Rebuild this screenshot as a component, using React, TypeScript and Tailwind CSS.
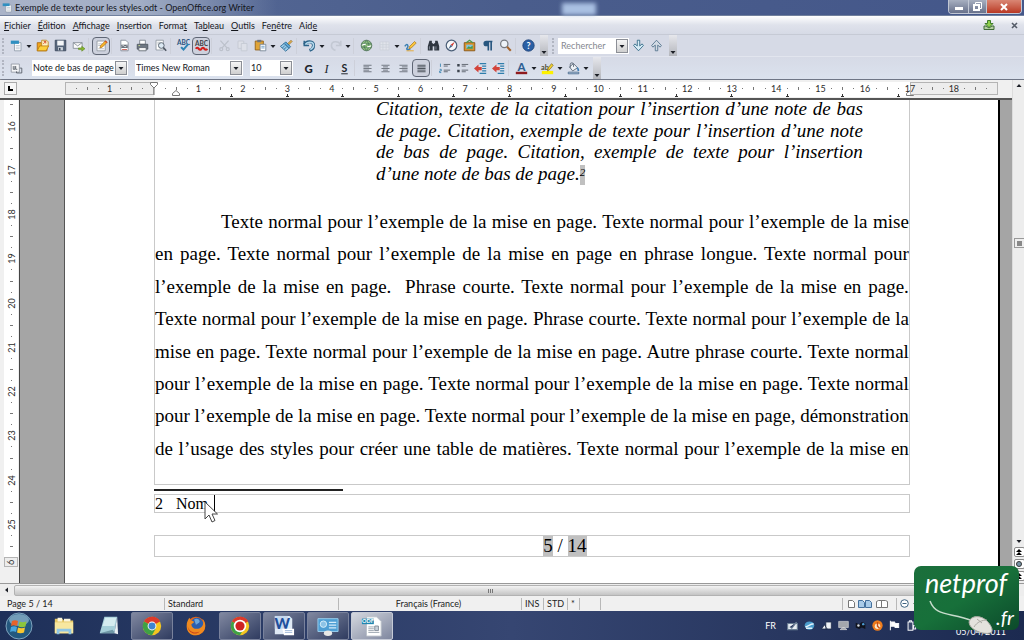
import { useState } from "react";
import type { ReactNode } from "react";
import clsx from "clsx";

const uiFont = "font-['Lato','Open_Sans',sans-serif]";
const docFont = "font-['Liberation_Serif','Times_New_Roman',serif]";

// [before, mnemonic, after]
const menus: [string, string, string][] = [
  ["", "F", "ichier"],
  ["", "É", "dition"],
  ["", "A", "ffichage"],
  ["", "I", "nsertion"],
  ["Forma", "t", ""],
  ["Ta", "b", "leau"],
  ["", "O", "utils"],
  ["Fe", "n", "être"],
  ["Aid", "e", ""],
];

const citation = [
  "Citation, texte de la citation pour l’insertion d’une note de bas",
  "de page. Citation, exemple de texte pour l’insertion d’une note",
  "de bas de page. Citation, exemple de texte pour l’insertion",
];

const body = [
  "Texte normal pour l’exemple de la mise en page. Texte normal pour l’exemple de la mise",
  "en page. Texte normal pour l’exemple de la mise en page en phrase longue. Texte normal pour",
  "l’exemple de la mise en page. \u00a0Phrase courte. Texte normal pour l’exemple de la mise en page.",
  "Texte normal pour l’exemple de la mise en page. Phrase courte. Texte normal pour l’exemple de la",
  "mise en page. Texte normal pour l’exemple de la mise en page. Autre phrase courte. Texte normal",
  "pour l’exemple de la mise en page. Texte normal pour l’exemple de la mise en page. Texte normal",
  "pour l’exemple de la mise en page. Texte normal pour l’exemple de la mise en page, démonstration",
  "de l’usage des styles pour créer une table de matières. Texte normal pour l’exemple de la mise en",
];

/* ---------- toolbar icons, all on a 16x16 grid ---------- */

const page = <path d="M3.5 1.5h6l3 3v10h-9z" fill="#fff" stroke="#7b8490" />;

const icons: Record<string, ReactNode> = {
  new: (
    <>
      <path d="M5.5 4.5h8v10h-8z" fill="#fff" stroke="#8a96a5" />
      <path d="M1 2h10v4H1z" fill="#2f8fc0" />
      <path d="M7 8h5M7 10h5M7 12h5" stroke="#b5bfca" />
    </>
  ),
  open: (
    <>
      <path d="M1.5 4.5h5l1 2h6v8h-12z" fill="#f2a51d" stroke="#a9650c" />
      <path d="M7 1.5h6l2 2v6H7z" fill="#fff3c4" stroke="#b98318" />
      <path d="M1.5 14.5l3-6h11l-3 6z" fill="#fcd03c" stroke="#b97a10" />
      <path d="M9 6l3-3m0 0H9.5m2.5 0v2.5" stroke="#cf3a19" fill="none" />
    </>
  ),
  save: (
    <>
      <path d="M1.5 1.5h13v13h-13z" fill="#56657a" stroke="#39465a" />
      <path d="M4 2h8v6H4z" fill="#f4f6f8" />
      <path d="M5 10h6v4H5z" fill="#cdd5dd" />
      <path d="M6 11h2v3H6z" fill="#39465a" />
    </>
  ),
  mail: (
    <>
      <path d="M1.5 4.5h11v7h-11z" fill="#fbfbfb" stroke="#7e8791" />
      <path d="M1.5 4.5l5.5 4 5.5-4" fill="none" stroke="#7e8791" />
      <path d="M8 11h4V9l4 3-4 3v-2H8z" fill="#86b82e" stroke="#527a15" strokeWidth=".6" />
    </>
  ),
  edit: (
    <>
      <path d="M2.5 2.5h10v12h-10z" fill="#fff" stroke="#8a929c" />
      <path d="M4 6h5M4 8h4M4 12h7" stroke="#aab2bb" />
      <path d="M6 11l1-3 6-6 2 2-6 6z" fill="#f7b52b" stroke="#a8670f" strokeWidth=".8" />
      <path d="M12 3l1-1 2 2-1 1z" fill="#d8432e" />
    </>
  ),
  pdf: (
    <>
      {page}
      <path d="M4 7h8v4H4z" fill="#626a74" />
      <path d="M5 9c2-3 3 3 6-1" stroke="#fff" fill="none" />
      <path d="M5 13h6" stroke="#c83d32" />
    </>
  ),
  print: (
    <>
      <path d="M4.5 1.5h7v5h-7z" fill="#fff" stroke="#737b85" />
      <path d="M1.5 6.5h13v6h-13z" fill="#6f7883" stroke="#4a525c" />
      <path d="M3.5 10.5h9v4h-9z" fill="#f4f4f4" stroke="#5c646e" />
      <path d="M3 8h2" stroke="#c7e08a" />
    </>
  ),
  preview: (
    <>
      <path d="M2.5 1.5h9v12h-9z" fill="#fff" stroke="#8a929c" />
      <path d="M4 4h4M4 6h2" stroke="#b5bcc4" />
      <circle cx="9" cy="8" r="3.5" fill="#dce9f3" stroke="#5c6672" strokeWidth="1.2" />
      <path d="M11.5 10.5L15 14.5" stroke="#4c5560" strokeWidth="2" />
    </>
  ),
  spell: (
    <>
      <text x="0" y="7" fontSize="8" fontWeight="700" fill="#27507c">ABC</text>
      <path d="M5 10l3 3 6-7" fill="none" stroke="#2d84b5" strokeWidth="2.5" />
    </>
  ),
  autospell: (
    <>
      <text x="0" y="8" fontSize="8" fontWeight="700" fill="#3f3f46">ABC</text>
      <path d="M1 12q1.500-2.500 3.500 0t3.500 0 3.500 0 3.500 0" fill="none" stroke="#d3201c" strokeWidth="2.6" />
    </>
  ),
  cut: (
    <g stroke="#bcc1cb" fill="none" strokeWidth="1.5">
      <path d="M3 2l8 9M13 2L5 11" />
      <circle cx="4" cy="12.5" r="1.8" />
      <circle cx="12" cy="12.5" r="1.8" />
    </g>
  ),
  copy: (
    <g fill="#dde0e8" stroke="#c3c8d2">
      <path d="M2.5 2.5h7v9h-7z" />
      <path d="M6.5 5.5h7v9h-7z" />
    </g>
  ),
  paste: (
    <>
      <path d="M1.5 2.5h10v11h-10z" fill="#e0a436" stroke="#8c5b12" />
      <path d="M4 1h5v3H4z" fill="#6d7580" />
      <path d="M7.5 6.5h7v8h-7z" fill="#fff" stroke="#6e7f93" />
      <path d="M9 9h4M9 11h4" stroke="#5c93c4" />
    </>
  ),
  brush: (
    <>
      <path d="M9 6l4.5-4.5 1.5 1.5L10.5 7.5z" fill="#e0b04d" stroke="#855c1a" strokeWidth=".7" />
      <path d="M7 3.5l6 6-2 2-6-6z" fill="#5fa9d8" stroke="#24648f" />
      <path d="M5 5.5l6 6-4 3.5L0.5 9z" fill="#9dcdea" stroke="#24648f" />
      <path d="M3 11l3-3M5 12.5l3-2.5" stroke="#24648f" />
    </>
  ),
  undo: (
    <>
      <path d="M1.5 2v6h6" fill="none" stroke="#2b6288" strokeWidth="1.8" />
      <path d="M2 7c2-5 11-5 11 1 0 3-2 5-5 6" fill="none" stroke="#2b6288" strokeWidth="3.8" />
      <path d="M3 7c2-4 10-4 10 1 0 3-2 4-4 5" fill="none" stroke="#b3d8ec" strokeWidth="1.8" />
    </>
  ),
  redo: (
    <path d="M14 7C12 2 3 2 3 8c0 3 2 5 5 6M14.5 2v6h-6" fill="none" stroke="#c3c8d3" strokeWidth="2" />
  ),
  globe: (
    <>
      <circle cx="8" cy="8" r="6.5" fill="#8ebf7c" stroke="#4c6c58" />
      <path d="M2 6h12M2 10h12M8 2c-4 4-4 8 0 12M8 2c4 4 4 8 0 12" stroke="#49745b" fill="none" />
      <path d="M3 8a2 2 0 0 1 2-1.500h2M13 8a2 2 0 0 1-2 1.500H9" stroke="#fff" strokeWidth="1.5" fill="none" />
    </>
  ),
  table: <path d="M2.5 3.5h11v10h-11zM2.5 7h11M2.5 10h11M6 3.5v10M10 3.5v10" fill="#e1e4eb" stroke="#cdd1da" />,
  draw: (
    <>
      <path d="M1 9c3-5 5 0 3 2s1 3 4 1" fill="none" stroke="#3c7fb2" strokeWidth="1.8" />
      <path d="M6 12l1-3 6-6 2 2-6 6z" fill="#fbc63e" stroke="#a3700f" strokeWidth=".8" />
      <path d="M3 14.5h9" stroke="#e7a21b" />
    </>
  ),
  find: (
    <g fill="#2f3640">
      <path d="M3 2h3v3h1v9H1V9zM13 2h-3v3H9v9h6V9z" />
      <path d="M6 6h4v3H6z" />
      <path d="M3 9v4M11 9v4" stroke="#8f99a6" />
    </g>
  ),
  navigator: (
    <>
      <circle cx="8" cy="8" r="6.5" fill="#f4f7fa" stroke="#4b5f78" strokeWidth="1.5" />
      <path d="M12 3.5L9 9 7 7z" fill="#d2372c" />
      <path d="M4 12.5L7 7l2 2z" fill="#3c5d86" />
    </>
  ),
  gallery: (
    <>
      <path d="M1.5 4.5h13v10h-13z" fill="#d9922a" stroke="#7e4e10" />
      <path d="M4 7h8v5H4z" fill="#7fc4e2" />
      <path d="M4 12l3-3 2 1 3-2v4z" fill="#4d9745" />
      <path d="M4 4.5l4-3 4 3" fill="none" stroke="#4d9745" strokeWidth="1.5" />
    </>
  ),
  pilcrow: <path d="M14 2H6.5a3.5 3.5 0 0 0 0 7H8v5h2V4h1.5v10h2V4H14z" fill="#27567f" />,
  zoom: (
    <>
      <circle cx="6.5" cy="6" r="4.5" fill="#eef3f8" stroke="#75797f" strokeWidth="1.5" />
      <path d="M10 9.5L14.5 14.5" stroke="#a4642b" strokeWidth="2.5" />
    </>
  ),
  help: (
    <>
      <circle cx="8" cy="8" r="7" fill="#2a5fa5" stroke="#1c3f74" />
      <text x="8" y="12" fontSize="11" fontWeight="700" fill="#fff" textAnchor="middle">?</text>
    </>
  ),
  down: <path d="M6.5 1.5h3v7l3-2.5 1.5 2-6 6.5L2 8l1.5-2 3 2.5z" fill="#d6ebf5" stroke="#25617f" />,
  up: <path d="M6.5 14.5h3v-7l3 2.5L14 8 8 1.5 2 8l1.5 2 3-2.5z" fill="#d3dbe4" stroke="#4b6d86" />,
  styles: (
    <>
      <path d="M1.5 2.5h10v10h-10z" fill="#f5f6f8" stroke="#8d949e" />
      <path d="M4 5v4h2V5M7 5v4h2M12 7.5h2.5v6H8v-2" stroke="#4d555f" fill="none" />
    </>
  ),
  bold: <text x="8" y="13" fontSize="14" fontWeight="900" fill="#20242b" textAnchor="middle">G</text>,
  italic: (
    <text x="8" y="13" fontSize="15" fontStyle="italic" fontWeight="400" fill="#20242b" textAnchor="middle" className="font-['Liberation_Serif',serif]">I</text>
  ),
  underline: (
    <>
      <text x="8" y="12" fontSize="13" fontWeight="700" fill="#20242b" textAnchor="middle">S</text>
      <path d="M4 14.5h8" stroke="#20242b" strokeWidth="1.2" />
    </>
  ),
  left: <path d="M3 4h10M3 6h7M3 8h10M3 10h7M3 12h10" stroke="#5c636d" />,
  center: <path d="M3 4h10M5 6h6M3 8h10M5 10h6M3 12h10" stroke="#5c636d" />,
  right: <path d="M3 4h10M6 6h7M3 8h10M6 10h7M3 12h10" stroke="#5c636d" />,
  justify: <path d="M3 4h10M3 6h10M3 8h10M3 10h10M3 12h10" stroke="#4c535c" strokeWidth="1.2" />,
  numbers: (
    <>
      <path d="M3 2v4M2 9h2v2H2v2h2" stroke="#2f7eac" fill="none" />
      <path d="M7 3h8M7 5h5M7 10h8M7 12h5" stroke="#4c535c" />
    </>
  ),
  bullets: (
    <>
      <path d="M1.5 2.5h3v3h-3zM1.5 9.5h3v3h-3z" fill="#3c444e" />
      <path d="M7 3h8M7 5h5M7 10h8M7 12h5" stroke="#4c535c" />
    </>
  ),
  outdent: (
    <>
      <path d="M7 2h8M10 5h5M10 8h5M10 11h5M7 14h8" stroke="#2f7eac" strokeWidth="1.4" />
      <path d="M9.5 6H5.5V3L0 8l5.5 5v-3h4z" fill="#d3433a" />
    </>
  ),
  fontColor: (
    <>
      <text x="8" y="11" fontSize="14" fontWeight="900" fill="#2f5f93" textAnchor="middle">A</text>
      <path d="M1 12h14v3H1z" fill="#8e1b1f" />
    </>
  ),
  highlight: (
    <>
      <path d="M1 11h14v4H1z" fill="#fdf100" />
      <text x="0" y="10" fontSize="9" fontWeight="700" fill="#4b4b32">ab</text>
      <path d="M8 11l1-4 4-5 2 2-4 5z" fill="#f5d22f" stroke="#7a6612" strokeWidth=".8" />
    </>
  ),
  fill: (
    <>
      <path d="M3 6l5-4 5 5-6 4z" fill="#eef2f6" stroke="#505e6e" />
      <path d="M4 7V3a2 2 0 0 1 4 0v3" fill="none" stroke="#505e6e" />
      <path d="M12 6c3 1 3 3 3 5h-2z" fill="#3f7fb5" />
      <path d="M1.5 12.5h13v2h-13z" fill="#c7d6e4" stroke="#3f6288" />
    </>
  ),
};

const labels: Record<string, string> = {
  new: "Nouveau", open: "Ouvrir", save: "Enregistrer", mail: "Envoyer par e-mail", edit: "Mode édition",
  pdf: "Exporter au format PDF", print: "Imprimer", preview: "Aperçu", spell: "Orthographe",
  autospell: "Vérification automatique", cut: "Couper", copy: "Copier", paste: "Coller", brush: "Pinceau",
  undo: "Annuler", redo: "Restaurer", globe: "Hyperlien", table: "Tableau", draw: "Dessin", find: "Rechercher",
  navigator: "Navigateur", gallery: "Galerie", pilcrow: "Caractères non imprimables", zoom: "Zoom", help: "Aide",
  down: "Suivant", up: "Précédent", styles: "Styles et formatage", bold: "Gras", italic: "Italique",
  underline: "Souligné", left: "Aligner à gauche", center: "Centrer", right: "Aligner à droite",
  justify: "Justifier", numbers: "Numérotation", bullets: "Puces", outdent: "Diminuer le retrait",
  fontColor: "Couleur de police", highlight: "Surlignage", fill: "Arrière-plan",
};

// "|" separator, "v" drop-down caret, "+" prefix = pressed
const standardBar = "new v open save mail | +edit | pdf print preview | spell +autospell | cut copy paste v brush | undo v redo v | globe table v draw | find navigator gallery pilcrow zoom | help".split(" ");
const formatBar = "bold italic underline | left center right +justify | numbers bullets outdent outdent | fontColor v highlight v fill v".split(" ");

function Tool({ name }: { name: string }) {
  const pressed = name.startsWith("+");
  const id = pressed ? name.slice(1) : name;
  return (
    <button
      aria-label={labels[id]}
      className={clsx(
        "flex size-[18px] shrink-0 items-center justify-center",
        pressed && "rounded-sm border border-[#5f6675] bg-[#cdd1dd]"
      )}
    >
      <svg viewBox="0 0 16 16" className="size-[13px] shrink-0 overflow-visible">{icons[id]}</svg>
    </button>
  );
}

function Caret() {
  return (
    <svg viewBox="0 0 8 8" className="size-2 shrink-0">
      <path d="M1.5 3h5L4 6z" fill="#1c1f26" />
    </svg>
  );
}

function Tools({ items }: { items: string[] }) {
  return (
    <>
      {items.map((item, i) => {
        if (item === "|") return <span key={i} className="mr-[3px] ml-px h-4 w-px shrink-0 bg-[#cdd0da]" />;
        if (item === "v") return <Caret key={i} />;
        return <Tool key={i} name={item} />;
      })}
    </>
  );
}

function Grip() {
  return <span className="mr-px ml-0.5 h-4 w-1 shrink-0 border-l-2 border-dotted border-[#b1b5c1]" />;
}

function Overflow() {
  return (
    <button aria-label="Plus de boutons" className="flex h-full w-2 shrink-0 items-end justify-center bg-linear-to-b from-[#e6e7ec] to-[#b4b6bc]">
      <Caret />
    </button>
  );
}

function Combo({ label, value, width }: { label: string; value: string; width: string }) {
  return (
    <label className={clsx("relative h-4 shrink-0 bg-white", width)}>
      <select aria-label={label} defaultValue={value} className="block h-4 w-full appearance-none pl-px text-[9px] leading-4 outline-none">
        <option>{value}</option>
      </select>
      <DropArrow />
    </label>
  );
}

function DropArrow() {
  return (
    <span className="pointer-events-none absolute top-px right-px flex h-3.5 w-3 items-center justify-center border border-[#8c8f96] bg-linear-to-b from-[#f6f6f6] to-[#cfcfcf]">
      <Caret />
    </span>
  );
}

/* ---------- rulers ---------- */

function HRulerMark({ quarter, tab }: { quarter: number; tab?: boolean }) {
  const n = Math.abs(quarter);
  return (
    <span className="relative flex h-[13px] w-0 items-center justify-center">
      {n % 4 === 0 ? (
        <span>{n / 4}</span>
      ) : (
        <span className={clsx("w-px shrink-0 bg-[#777]", n % 2 === 0 ? "h-[3px]" : "h-px")} />
      )}
      {tab && (
        <span className="absolute -bottom-0.5 flex flex-col items-center">
          <span className="h-0.5 w-px bg-[#333]" />
          <span className="h-px w-[3px] bg-[#333]" />
        </span>
      )}
    </span>
  );
}

function range(from: number, to: number) {
  return Array.from({ length: to - from + 1 }, (_, i) => from + i);
}

function HorizontalRuler() {
  return (
    <div className="flex h-[18px] items-start bg-[#f0f0f0] pt-0.5 text-[9px] leading-none text-[#2b2b2b]">
      <div className="flex w-[65px] shrink-0 pl-1">
        <button aria-label="Tabulation" className="flex size-[13px] items-center justify-center border border-[#aaa] bg-[#f6f6f6]">
          <span className="size-[5px] border-b-2 border-l-2 border-black" />
        </button>
      </div>
      <div className="flex h-[13px] w-[89px] shrink-0 items-center justify-evenly border border-[#b4b4b4] bg-[#ededed]">
        {range(-7, -1).map((q) => <HRulerMark key={q} quarter={q} />)}
      </div>
      <div className="relative flex h-[15px] flex-1 justify-evenly bg-white">
        {range(1, 67).map((q) => <HRulerMark key={q} quarter={q} tab={q >= 7 && (q - 7) % 5 === 0} />)}
        {/* indent handles */}
        <svg viewBox="0 0 30 15" className="absolute top-0 -left-1 h-[15px] w-[30px]">
          <path d="M.5.5h7v2l-3.5 3.5L.5 2.5zM4 6v7" fill="#fff" stroke="#777" />
          <path d="M22.5 13.5v-2l3.5-3 3.5 3v2z" fill="#fff" stroke="#777" />
        </svg>
        <svg viewBox="0 0 8 15" className="absolute top-0 -right-1 h-[15px] w-2">
          <path d="M.5 13.5v-2L4 8.5l3.5 3v2z" fill="#fff" stroke="#777" />
        </svg>
      </div>
      <div className="relative mr-3.5 flex h-[13px] w-[88px] shrink-0 items-center justify-evenly border border-[#b4b4b4] bg-[#ededed]">
        <span className="absolute top-0 -left-1.5 leading-[11px]">17</span>
        {range(69, 75).map((q) => <HRulerMark key={q} quarter={q} />)}
      </div>
    </div>
  );
}

function VerticalRuler() {
  return (
    <div className="flex w-[19px] shrink-0 flex-col bg-[#f0f0f0] pl-1 text-[9px] leading-none text-[#2b2b2b]">
      <div className="flex w-3.5 flex-1 flex-col justify-between bg-white pt-1 pb-2.5">
        {range(62, 102).map((q) => (
          <span key={q} className="flex h-0 items-center justify-center">
            {q % 4 === 0 ? (
              <span className="-rotate-90">{q / 4}</span>
            ) : (
              <span className={clsx("h-px shrink-0 bg-[#777]", q % 2 === 0 ? "w-[3px]" : "w-px")} />
            )}
          </span>
        ))}
      </div>
      <div className="mb-4 flex h-2.5 w-3.5 items-center justify-center border border-[#b4b4b4] bg-[#ededed]">
        <span className="-rotate-90">6</span>
      </div>
    </div>
  );
}

/* ---------- document ---------- */

function Line({ children, className }: { children: ReactNode; className?: string }) {
  return <p className={clsx("text-justify whitespace-nowrap [text-align-last:justify]", className)}>{children}</p>;
}

function Document() {
  return (
    <div className="flex flex-1 border-l border-[#444] bg-[#a5a5a5] pr-3 pl-11">
      <div className={clsx("flex flex-1 flex-col border-r-2 border-l border-r-black border-l-[#555] bg-white pr-[88px] pl-[89px] text-[19px] text-black", docFont)}>
        <div className="flex h-[385px] flex-col border-x border-b border-[#c9c9c9]">
          <div className="grid h-[86px] auto-rows-fr pr-[46px] pl-[221px] leading-[17px] italic">
            {citation.map((line) => <Line key={line}>{line}</Line>)}
            <p className="whitespace-nowrap">
              d’une note de bas de page.
              <span className="inline-block h-5 bg-[#c0c0c0] align-top text-[11px] leading-[14px]">2</span>
            </p>
          </div>
          <div className="mt-[21px] grid h-[259px] auto-rows-fr leading-[29px]">
            {body.map((line, i) => <Line key={i} className={i === 0 ? "pl-[66px]" : undefined}>{line}</Line>)}
          </div>
        </div>
        <div className="mt-1 h-0.5 w-1/4 bg-[#222]" />
        <div className="relative mt-[3px] flex h-[19px] border border-[#c9c9c9] text-base leading-[18px]">
          <span className="w-[21px]">2</span>
          <span>Nom</span>
          <span className="ml-1.5 h-[17px] w-px bg-black" />
          <svg viewBox="0 0 14 22" className="absolute top-1.5 left-[49px] h-[22px] w-3.5">
            <path d="M1 1v17l4-4 3 7 3-1.500L8 13h5.500z" fill="#fff" stroke="#444" />
          </svg>
        </div>
        <div className="mt-[22px] h-[22px] border border-[#c9c9c9] pl-[66px] text-center leading-5">
          <span className="inline-block bg-[#c0c0c0]">5</span> / <span className="inline-block bg-[#c0c0c0]">14</span>
        </div>
      </div>
    </div>
  );
}

function VerticalScrollbar() {
  return (
    <div className="flex w-3.5 shrink-0 flex-col items-center border-l border-[#dcdcdc] bg-[#ededed]">
      <button aria-label="Défiler vers le haut" className="mt-0.5 rotate-180"><Caret /></button>
      <button aria-label="Position" className="mt-[148px] flex h-2.5 w-[11px] items-center justify-center border border-[#999] bg-[#eee]">
        <span className="size-[5px] bg-[#888]" />
      </button>
      <div className="flex-1" />
      <button aria-label="Défiler vers le bas" className="mb-0.5"><Caret /></button>
      {["Page précédente", "Navigation", "Page suivante"].map((label, i) => (
        <button key={label} aria-label={label} className="mb-0.5 flex h-2.5 w-[11px] items-center justify-center rounded-xs border border-[#888] bg-white">
          <svg viewBox="0 0 8 8" className="size-2">
            {i === 1 ? <circle cx="4" cy="4" r="2.5" fill="#7896a8" stroke="#333" /> : <path d="M1 4l3-3 3 3zM1 7l3-3 3 3z" />}
          </svg>
        </button>
      ))}
    </div>
  );
}

function HorizontalScrollbar() {
  return (
    <div className="flex h-[13px] items-center border-t border-[#999] bg-[#ededed] pr-3">
      <button aria-label="Défiler à gauche" className="flex w-3.5 rotate-90 items-center justify-center"><Caret /></button>
      <div className="flex h-[11px] flex-1 justify-center gap-px rounded-xs border border-[#b2b2b2] bg-linear-to-b from-[#f3f3f3] to-[#c4c4c4] pt-[3px] pr-[46px]">
        {[0, 1, 2].map((i) => <span key={i} className="h-1 w-px bg-[#777]" />)}
      </div>
    </div>
  );
}

/* ---------- status bar ---------- */

function StatusBar() {
  const cell = "flex h-3 shrink-0 items-center border-l border-[#b8b8b8] pl-[3px]";
  return (
    <div className="flex h-[15px] items-center bg-[#f0f0f0] text-[9px] leading-none text-[#222]">
      <span className="w-[164px] shrink-0 pl-[7px]">Page 5 / 14</span>
      <span className={clsx(cell, "w-[174px]")}>Standard</span>
      <span className={clsx(cell, "w-[183px] justify-center pr-1.5")}>Français (France)</span>
      <span className={clsx(cell, "w-[22px]")}>INS</span>
      <span className={clsx(cell, "w-6")}>STD</span>
      <span className={clsx(cell, "w-3")}>*</span>
      <span className={clsx(cell, "w-[21px]")} />
      <span className={clsx(cell, "flex-1")} />
      <span className={clsx(cell, "w-[54px]")}>
        <svg viewBox="0 0 44 10" className="h-2.5 w-11" fill="#fff" stroke="#777">
          <path d="M2.5 1.5h4l2 2v5h-6z" />
          <path d="M12.5 1.5h4l2 2v5h-6zM19.5 1.5h4l2 2v5h-6z" fill="#a9cbe8" stroke="#44709d" />
          <path d="M30.5 2.5l2-1h3v7h-5zM35.5 1.5h4l2 1v6h-6z" />
        </svg>
      </span>
      <span className={clsx(cell, "w-32 gap-1")}>
        <button aria-label="Zoom arrière">
          <svg viewBox="0 0 9 9" className="size-[9px]" fill="#fff" stroke="#3e6380">
            <circle cx="4.5" cy="4.5" r="3.8" />
            <path d="M2.5 4.5h4" />
          </svg>
        </button>
        <span className="h-px w-20 bg-[#999]" />
      </span>
    </div>
  );
}

/* ---------- taskbar ---------- */

function Chrome({ center }: { center: string }) {
  return (
    <>
      <circle cx="12" cy="12" r="10" fill="#f4c520" />
      <path d="M12 12L3.3 7A10 10 0 0 1 20.7 7z" fill="#dc3a2b" />
      <path d="M12 12L3.3 7A10 10 0 0 0 12 22l4-7z" fill="#3fa145" />
      <path d="M12 2a10 10 0 0 1 8.7 5H12z" fill="#dc3a2b" />
      <circle cx="12" cy="12" r="4.8" fill="#fff" />
      <circle cx="12" cy="12" r="3.8" fill={center} />
    </>
  );
}

const apps: { label: string; state?: "open" | "active"; icon: ReactNode }[] = [
  {
    label: "Explorateur",
    icon: (
      <>
        <path d="M2 4h8l2 2h10v14H2z" fill="#e5c765" />
        <path d="M2 8h20v12H2z" fill="#f7e7a0" />
        <path d="M5 3h5v4H5zM12 4h7v3h-7z" fill="#fbf6dd" />
        <path d="M4 21v-6h16v6h-3v-3H7v3z" fill="#8fc6e6" />
      </>
    ),
  },
  {
    label: "Bloc-notes",
    icon: (
      <>
        <path d="M8 2h14l-3 18H3z" fill="#a6cfd9" />
        <path d="M9 3h12l-2 9H6z" fill="#d5ecf0" />
        <path d="M3 20l14-4 3 4z" fill="#6f97a6" />
        <path d="M22 2l1 19-4-1z" fill="#e9eff2" />
      </>
    ),
  },
  { label: "Chrome", state: "open", icon: <Chrome center="#3e83d0" /> },
  {
    label: "Firefox",
    icon: (
      <>
        <circle cx="12" cy="12" r="10" fill="#e2661b" />
        <circle cx="13" cy="10" r="7" fill="#2c5fae" />
        <path d="M10 5c3-2 6 0 6 2s-3 2-4 4z" fill="#6aa6dc" />
        <path d="M2 9c1-3 2-5 3-6l1 3c2 0 4 1 4 2l-3 2c0 5 7 7 11 3 3-3 2-7 1-9 4 4 4 10 1 14S9 24 5 20s-3-8-3-11z" fill="#ef8a1f" />
        <path d="M3 12c1 6 7 9 13 6-5 5-13 1-13-6z" fill="#c8401a" />
      </>
    ),
  },
  {
    label: "Enregistreur",
    state: "open",
    icon: (
      <>
        <Chrome center="#cf2222" />
        <circle cx="12" cy="12" r="6.8" fill="#fff" />
        <circle cx="12" cy="12" r="5" fill="#cf2222" />
      </>
    ),
  },
  {
    label: "Word",
    state: "open",
    icon: (
      <>
        <path d="M2 1h16l3 3v17H2z" fill="#dfe9f5" />
        <path d="M2 1h14v14H2z" fill="#c6d8ee" />
        <text x="10" y="15" fontSize="16" fontWeight="900" fill="#1f4f9b" textAnchor="middle">W</text>
        <path d="M10 15h13v7H12z" fill="#fff" />
        <path d="M13 17h8M13 19h8" stroke="#9db7d8" />
      </>
    ),
  },
  {
    label: "Panneau de configuration",
    state: "open",
    icon: (
      <>
        <path d="M1 4h22v14H1z" fill="#4f9fd4" stroke="#9bd0ef" />
        <circle cx="7" cy="10" r="3.5" fill="#8dc3e6" stroke="#d9f0fb" />
        <path d="M13 8h8M13 11h8M13 14h8" stroke="#d3ecfa" strokeWidth="1.5" />
        <ellipse cx="12" cy="20" rx="4.5" ry="3" fill="#e8e8e6" />
      </>
    ),
  },
  {
    label: "OpenOffice Writer",
    state: "active",
    icon: (
      <>
        <path d="M6 2h11l5 5v16H6z" fill="#fff" stroke="#b9c0c8" />
        <path d="M1 4h13v6H1z" fill="#1f86b0" />
        <text x="7.5" y="9" fontSize="6" fontWeight="700" fill="#fff" textAnchor="middle">ODF</text>
        <path d="M8 13h6M8 15h6M8 17h6M8 19h12" stroke="#98a2ad" />
        <path d="M15 12h4v5h-4z" fill="#c9d2db" stroke="#7e8995" />
      </>
    ),
  },
];

const trayIcons: ReactNode[] = [
  <path key="t" d="M1 5h14v9H1zM4 10l3 2 7-9" fill="#e8eef4" stroke="#6a7f95" strokeWidth="1.5" />,
  <g key="t">
    <ellipse cx="8" cy="8" rx="7" ry="6" fill="#4a9ccc" />
    <path d="M2 10c5-1 8-5 12-4M3 12h9" stroke="#e2f2fb" strokeWidth="2" fill="none" />
  </g>,
  <path key="t" d="M7 3h8v10H7zM1 13l4-6 4 6z" fill="#eef1f5" stroke="#15213f" />,
  <path key="t" d="M1 2h14v9H1zM3 14l4-3h2l4 3z" fill="#a4a7ad" stroke="#d6d6d8" />,
  <g key="t">
    <path d="M1 4l5 2 4-3 5 2v8l-5-2-4 2-5-2z" fill="#10131d" />
    <circle cx="5" cy="8" r="1.8" fill="#d5dbe2" />
    <circle cx="12" cy="6" r="1.8" fill="#4d9bd3" />
  </g>,
  <g key="t">
    <circle cx="8" cy="8" r="7.5" fill="#ee7c1c" />
    <circle cx="8" cy="9" r="4" fill="#fde9c9" />
    <path d="M8 3v6l3 3" stroke="#c94d12" strokeWidth="2" fill="none" />
  </g>,
  <path key="t" d="M2 1v14M3 3h5l1 2h5v6H9L8 9H3z" fill="#fff" stroke="#f3f5f8" strokeWidth="1.5" />,
  <path key="t" d="M3 3h7v12H3zM5 1h3v2H5zM11 8h3v5h-3z" fill="#39476b" stroke="#f1f3f7" strokeWidth="1.5" />,
];

function Taskbar() {
  return (
    <div className={clsx("flex h-[29px] items-center bg-linear-to-r from-[#1e3059] via-[#364672] to-[#1c2a50] text-white", uiFont)}>
      <button aria-label="Démarrer" className="mr-1 ml-[5px]">
        <svg viewBox="0 0 28 28" className="size-7">
          <circle cx="14" cy="14" r="13" fill="#24587e" stroke="#7fa3be" />
          <ellipse cx="14" cy="8" rx="10" ry="6" fill="#8db4cc" opacity=".75" />
          <path d="M7 9c2-1 4-1 6 0l-1 5c-2-1-4-1-6 0z" fill="#e8622a" />
          <path d="M14.5 9.5c2 1 4 1 7 0l-1 5c-2 1-5 1-7 0z" fill="#8cc63c" />
          <path d="M6 15c2-1 4-1 6 0l-1 5c-2-1-4-1-6 0z" fill="#49a6de" />
          <path d="M13 15.5c2 1 5 1 7 0l-1 5c-2 1-5 1-7 0z" fill="#fbc72f" />
        </svg>
      </button>
      <div className="flex h-full flex-1 items-end gap-0.5 pl-1.5">
        {apps.map((app) => (
          <button
            key={app.label}
            aria-label={app.label}
            className={clsx(
              "flex h-7 w-[42px] items-center justify-center rounded-xs border",
              !app.state && "border-transparent",
              app.state === "open" && "border-[#79829c] bg-linear-to-br from-[#8188a0] to-[#303c60]",
              app.state === "active" && "border-[#c5cad6] bg-linear-to-br from-[#d5d8df] to-[#7f879f]"
            )}
          >
            <svg viewBox="0 0 24 24" className="size-[22px] overflow-visible">{app.icon}</svg>
          </button>
        ))}
      </div>
      <span className="mr-[11px] text-[9px]">FR</span>
      <div className="flex gap-1.5">
        {trayIcons.map((icon, i) => (
          <button key={i} aria-label={`Notification ${i + 1}`}>
            <svg viewBox="0 0 16 16" className="size-[11px]">{icon}</svg>
          </button>
        ))}
      </div>
      <span className="mr-[18px] w-[89px] self-end text-right text-[9px] leading-4">05/04/2011</span>
    </div>
  );
}

function Logo() {
  return (
    <a href="#netprof" aria-label="netprof.fr" className="absolute right-1 bottom-1.5">
      <svg viewBox="0 0 106 68" className="block h-[68px] w-[106px]">
        <defs>
          <linearGradient id="green" x1="0" y1="0" x2="1" y2="1">
            <stop offset="0" stopColor="#1b6f3c" />
            <stop offset=".5" stopColor="#17703a" />
            <stop offset="1" stopColor="#0c4a2b" />
          </linearGradient>
        </defs>
        <rect width="105" height="64" rx="7" fill="url(#green)" />
        <text x="52" y="27" fontSize="27" fontStyle="italic" fill="#fff" textAnchor="middle" className="font-['Lato',sans-serif]">netprof</text>
        <path d="M16 35c6 16 20 11 43 20" fill="none" stroke="#c6dccb" strokeWidth="1.5" />
        <path d="M55 56c2-7 12-7 18-1 5 5 7 11 3 12-6 2-21-3-21-11z" fill="#e4e2dd" stroke="#a8a8a0" />
        <path d="M60 61c3-5 8-7 13-7M63 53l5 4" fill="none" stroke="#aaa9a2" />
        <text x="91" y="59" fontSize="20" fontStyle="italic" fill="#fff" textAnchor="middle" className="font-['Lato',sans-serif]">.fr</text>
      </svg>
    </a>
  );
}

function TitleBar() {
  return (
    <div className="flex h-4 items-center border-b border-[#71809d] bg-linear-to-r from-[#596c98] via-[#4a5d8c] to-[#44578a] text-[9px] leading-none text-[#14161c]">
      <div className="flex h-full w-[277px] shrink-0 items-center bg-linear-to-r from-[#a9b3c8] via-[#a3afc6] to-transparent pl-0.5">
        <svg viewBox="0 0 16 16" className="mr-0.5 size-[11px]">{icons.new}</svg>
        <h1 className="whitespace-nowrap">Exemple de texte pour les styles.odt - OpenOffice.org Writer</h1>
      </div>
      <div className="ml-[285px] h-3 w-[34px] self-end bg-[#a9c0e2] blur-[2px]" />
      <div className="mr-0.5 ml-auto flex h-3.5 self-start overflow-hidden rounded-b border border-t-0 border-[#c1c7d4]">
        <button aria-label="Réduire" className="flex w-[19px] items-center justify-center bg-linear-to-b from-[#a7afc0] to-[#69728c]">
          <span className="mt-1 h-[3px] w-2 bg-white" />
        </button>
        <button aria-label="Restaurer" className="flex w-[19px] items-center justify-center border-x border-[#c1c7d4] bg-linear-to-b from-[#a7afc0] to-[#69728c]">
          <svg viewBox="0 0 9 9" className="size-[9px]" fill="none" stroke="#fff">
            <path d="M2.5 2V.5h6v6H7" />
            <path d="M1 3h5v5H1z" strokeWidth="2" />
          </svg>
        </button>
        <button aria-label="Fermer" className="flex w-[34px] items-center justify-center bg-linear-to-b from-[#d98674] to-[#b93722]">
          <svg viewBox="0 0 8 8" className="size-2"><path d="M1 1l6 6M7 1L1 7" stroke="#fff" strokeWidth="2" /></svg>
        </button>
      </div>
    </div>
  );
}

export default function App() {
  const [search, setSearch] = useState("");

  return (
    <div className="relative flex min-h-screen flex-col overflow-hidden bg-[#d6dae6]">
      <div className={clsx("flex flex-1 flex-col text-[#14161c]", uiFont)}>
        <TitleBar />

        <nav className="flex h-[19px] items-center border-b border-[#c6cad5] bg-linear-to-b from-white via-[#dfe2eb] to-[#d6dae6] pl-1 text-[9px] leading-[11px]">
          <div className="flex gap-[7px]">
            {menus.map(([before, key, after]) => (
              <button key={before + key + after}>{before}<u>{key}</u>{after}</button>
            ))}
          </div>
          <button aria-label="Mise à jour" className="mr-4 ml-auto">
            <svg viewBox="0 0 12 10" className="h-2.5 w-3">
              <path d="M1 6h2l3 2 3-2h2v3.5H1z" fill="#b6cfa3" stroke="#3f6b35" />
              <path d="M4.5.5h3v3H10L6 7.5 2 3.5h2.5z" fill="#8fd04b" stroke="#3f7d2a" />
            </svg>
          </button>
          <button aria-label="Fermer le document" className="mr-1.5">
            <svg viewBox="0 0 7 7" className="size-[7px]"><path d="M1 1l5 5M6 1L1 6" stroke="#555c68" strokeWidth="1.6" /></svg>
          </button>
        </nav>

        <div className="flex h-[22px] items-center border-b border-[#e2e5ee]">
          <Grip />
          <Tools items={standardBar} />
          <span className="w-[3px]" />
          <Overflow />
          <span className="w-0.5" />
          <Grip />
          <label className="relative ml-px h-4 w-[71px] bg-white">
            <input
              aria-label="Rechercher"
              placeholder="Rechercher"
              value={search}
              onChange={(e) => setSearch(e.target.value)}
              className="block h-4 w-full pl-[3px] text-[9px] outline-none placeholder:text-[#85888f]"
            />
            <DropArrow />
          </label>
          <Tools items={["down", "up"]} />
          <span className="w-1" />
          <Overflow />
        </div>

        <div className="flex h-[22px] items-center bg-linear-to-b from-[#d6dae6] to-[#dbe2ee]">
          <Grip />
          <Tools items={["styles"]} />
          <div className="mr-1.5 ml-[7px] flex gap-[7px]">
            <Combo label="Style" value="Note de bas de page" width="w-24" />
            <Combo label="Police" value="Times New Roman" width="w-[108px]" />
            <Combo label="Taille" value="10" width="w-[43px]" />
          </div>
          <Tools items={formatBar} />
          <span className="w-[3px]" />
          <Overflow />
        </div>

        <div className="flex flex-1 border-t border-l-2 border-t-[#6f7686] border-l-[#8a8a8a]">
          <div className="-ml-0.5 flex flex-1 flex-col">
            <HorizontalRuler />
            <div className="flex flex-1 border-t-2 border-[#555]">
              <VerticalRuler />
              <Document />
            </div>
          </div>
          <VerticalScrollbar />
        </div>

        <HorizontalScrollbar />
        <StatusBar />
      </div>
      <Taskbar />
      <Logo />
    </div>
  );
}
